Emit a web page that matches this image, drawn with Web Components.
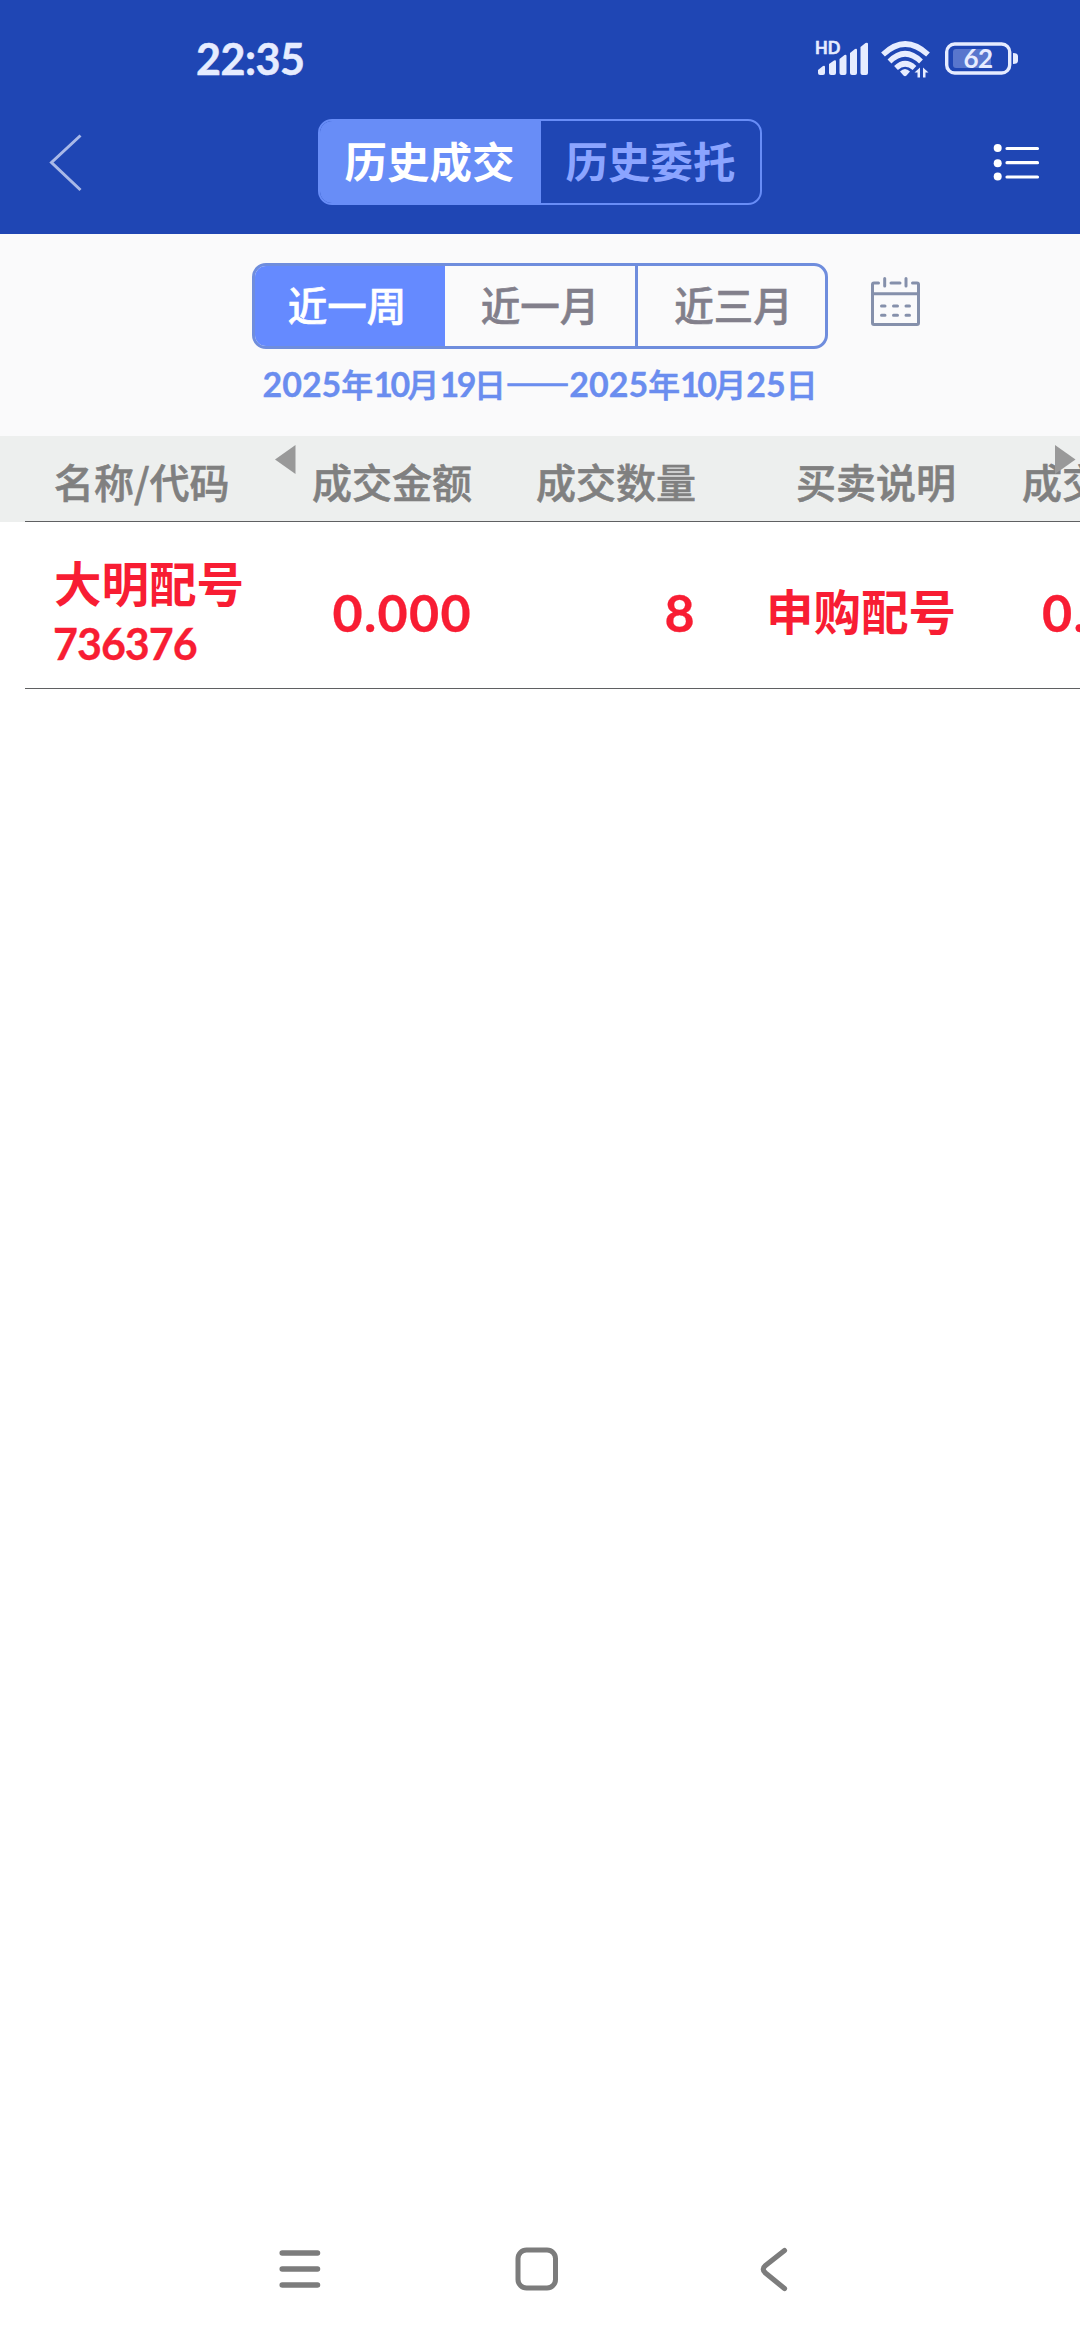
<!DOCTYPE html>
<html lang="zh-CN">
<head>
<meta charset="utf-8">
<title>历史成交</title>
<style>
body {
    margin: 0;
    background-color: #fff;
    font-family: "Noto Sans CJK SC", sans-serif;
}
</style>
</head>
<body>
<trade-app></trade-app>

<script>
function define(name, html) {
    const template = document.createElement("template");
    template.innerHTML = html.trim();

    customElements.define(name, class extends HTMLElement {
        constructor() {
            super();
            this.attachShadow({mode: "open"});
            this.shadowRoot.appendChild(template.content.cloneNode(true));
        }
    });
}

define("status-bar", `
<style>
:host {
    display: flex;
    justify-content: space-between;
    align-items: center;
    height: 118px;
    padding: 0 62px 0 196px;
    box-sizing: border-box;
    color: #e6ecff;
    font-family: Lato, sans-serif;
    font-weight: 700;
}

.time {
    font-size: 43px;
    line-height: 120px;
    letter-spacing: -.5px;
    -webkit-text-stroke: .5px;
}

svg {
    display: block;
}
</style>
<span class="time">22:35</span>
<svg width="204" height="40" viewBox="814 40 204 40" fill="#e6ecff">
    <text x="815" y="55" font-size="16.5" stroke="#e6ecff" stroke-width=".5">HD</text>
    <path d="M818 71l5-4q2-1 2 1v6q0 2-2 2h-3q-2 0-2-2z"/>
    <path d="M829 65l5-3.500q2-1 2 1v11.500q0 2-2 2h-3q-2 0-2-2z"/>
    <path d="M839.500 60l5-4q2-1 2 1v17q0 2-2 2h-3q-2 0-2-2z"/>
    <path d="M850 54l5-4q2-1 2 1v23q0 2-2 2h-3q-2 0-2-2z"/>
    <path d="M860.500 48l5-4q2.500-1 2.500 1v29q0 2-2 2h-3.500q-2 0-2-2z"/>
    <g fill="none" stroke="#e6ecff" stroke-width="5.500">
        <path d="M883 55.500Q905 34.500 928 55.500"/>
        <path d="M889.500 62.500Q905 47 921 62.500"/>
        <path d="M896 69Q905 60.500 914.500 69"/>
    </g>
    <path d="M900 72.500Q905 67.500 910 72.500l-3.500 4q-1.500 1.500-3 0z"/>
    <path d="M914.500 73.500l5.500-5v10h-2.500v-5zM923 68.500l5.500 5h-3v5h-2.500z"/>
    <rect x="946.700" y="45" width="63" height="29" rx="8" fill="none" stroke="#e6ecff" stroke-width="3.400"/>
    <rect x="953" y="50" width="38" height="19" rx="3" fill="#5876cd"/>
    <path d="M1013 54q5 0 5 3v5q0 3-5 3z"/>
    <text x="963.500" y="69" font-size="26" letter-spacing="-.5">62</text>
</svg>
`);

define("title-bar", `
<style>
:host {
    display: flex;
    justify-content: space-between;
    align-items: flex-start;
    height: 116px;
    padding: 1px 38px 0 48px;
    box-sizing: border-box;
}

svg {
    display: block;
}

.tabs {
    display: flex;
    width: 444px;
    height: 86px;
    margin-left: 4px;
    box-sizing: border-box;
    border: 2px solid #688df7;
    border-radius: 14px;
    overflow: hidden;
}
</style>
<svg width="36" height="86" viewBox="48 119 36 86" fill="none" stroke="#a9b9e8" stroke-width="3"><path d="M80.500 135.500L51.500 162.500L80.500 190"/></svg>
<div class="tabs"><slot></slot></div>
<svg width="50" height="86" viewBox="992 119 50 86" fill="#fff" stroke="#fff" stroke-width="3.200" stroke-linecap="round">
    <g stroke="none">
        <circle cx="997.700" cy="148" r="4"/>
        <circle cx="997.700" cy="163.300" r="4"/>
        <circle cx="997.700" cy="176.500" r="4"/>
    </g>
    <path d="M1007 148.500H1037.500M1007 162.700H1037.500M1007 177H1037.500"/>
</svg>
`);

define("title-tab", `
<style>
:host {
    flex: 1;
    color: #8ba4ff;
    font-size: 42.500px;
    font-weight: 700;
    line-height: 77px;
    text-align: center;
}

:host([active]) {
    padding-right: 2px;
    background-color: #688df7;
    color: #fff;
}
</style>
<slot></slot>
`);

define("range-filter", `
<style>
:host {
    display: flex;
    flex-flow: column nowrap;
    align-items: center;
    height: 202px;
    padding-top: 29px;
    box-sizing: border-box;
    background-color: #fafafb;
}

.row {
    display: flex;
    width: 100%;
    padding-left: 252px;
    box-sizing: border-box;
}

.ranges {
    display: flex;
    width: 576px;
    height: 86px;
    box-sizing: border-box;
    border: 3px solid #6f8ddd;
    border-radius: 14px;
    overflow: hidden;
}

svg {
    display: block;
    margin: 13px 0 0 42px;
}
</style>
<div class="row">
    <div class="ranges"><slot></slot></div>
    <svg width="52" height="52" viewBox="870 276 52 52" fill="none" stroke="#8590ab" stroke-width="3" stroke-linecap="round">
        <path d="M878.500 283H874q-1.500 0-1.500 1.500V323q0 1.500 1.500 1.500H917q1.500 0 1.500-1.500V284.500q0-1.500-1.500-1.500H912.500M891 283H900M884.700 278.500V286M906 278.500V286M873 293.700H918"/>
        <path d="M881.500 306H885M893.500 306H897.500M906 306H909.500M881.500 315.300H885M893.500 315.300H897.500M906 315.300H909.500"/>
    </svg>
</div>
<slot name="dates"></slot>
`);

define("range-option", `
<style>
:host {
    flex: 0 0 190px;
    box-sizing: border-box;
    color: #827f8b;
    font-size: 39.500px;
    font-weight: 500;
    line-height: 75px;
    text-align: center;
    -webkit-text-stroke: .6px;
}

:host([active]) {
    padding-right: 6px;
    background-color: #658aff;
    color: #fff;
}

:host([divided]) {
    padding-left: 4px;
    border-left: 3px solid #6f8ddd;
}
</style>
<slot></slot>
`);

define("date-range", `
<style>
:host {
    display: block;
    color: #6a8def;
    font-size: 31.800px;
    font-weight: 500;
    line-height: 68px;
    white-space: nowrap;
    -webkit-text-stroke: .7px;
}

::slotted(span) {
    -webkit-text-stroke: 1.600px;
}
</style>
<slot></slot>
`);

// digits use a latin face, drawn larger than the text around them
define("num-text", `
<style>
:host {
    font-family: Lato, sans-serif;
    font-size: var(--num-size, 34px);
    font-weight: 700;
    letter-spacing: var(--num-gap, 0);
    line-height: 1;
    -webkit-text-stroke: .3px;
}

:host([tight]) {
    letter-spacing: -2.500px;
}
</style><slot></slot>
`);

define("deal-table", `
<style>
:host {
    display: block;
    position: relative;
    overflow: hidden;
}

svg {
    position: absolute;
    top: 9px;
}

.prev {
    left: 275px;
}

.next {
    left: 1055px;
}
</style>
<slot></slot>
<svg class="prev" width="21" height="29"><path d="M0 14.500L20.500 0V29z" fill="#999"/></svg>
<svg class="next" width="21" height="29"><path d="M20.500 14.500L0 0V29z" fill="#999"/></svg>
`);

define("deal-row", `
<style>
:host {
    display: grid;
    grid-template-columns: 201px 217px 224px 260px auto;
    height: 167px;
    padding: 8px 0 0 54px;
    box-sizing: border-box;
    align-items: center;
    justify-items: end;
    white-space: nowrap;
    color: #f81d33;
    font-size: 47.500px;
    font-weight: 700;
    background: linear-gradient(#5f6062, #5f6062) 25px 100% / 100% 1px no-repeat;
}

:host([head]) {
    height: 86px;
    padding-top: 4px;
    color: #808080;
    font-size: 40px;
    font-weight: 500;
    background-color: #edefee;
    -webkit-text-stroke: .6px;
}

::slotted(:first-child) {
    justify-self: start;
}

::slotted(num-text) {
    padding-top: 4px;
}

::slotted(:last-child) {
    justify-self: start;
    padding-left: var(--last-pad, 67px);
}
</style>
<slot></slot>
`);

define("stock-name", `
<style>
:host {
    display: flex;
    flex-flow: column nowrap;
    padding-top: 8px;
    line-height: 60px;
    --num-size: 43px;
    --num-gap: -1px;
}

::slotted(num-text) {
    margin-left: -1px;
    line-height: 64px;
}
</style>
<slot></slot>
`);

define("nav-bar", `
<style>
:host {
    display: flex;
    justify-content: center;
    align-items: center;
    gap: 188.500px;
    height: 142px;
    padding-right: 7px;
}
</style>
<svg width="48" height="48" viewBox="275.500 2245 48 48" stroke="#7c7c7c" stroke-width="5.500" stroke-linecap="round"><path d="M281.700 2253H317M281.700 2269H317M281.700 2285H317"/></svg>
<svg width="48" height="48" viewBox="512 2245 48 48" fill="none" stroke="#7c7c7c" stroke-width="5"><rect x="517" y="2250" width="37.500" height="38" rx="8.500"/></svg>
<svg width="48" height="48" viewBox="749 2245 48 48" fill="none" stroke="#7c7c7c" stroke-width="5.200" stroke-linecap="round"><path d="M784.500 2250.500L765.500 2265.500Q761 2269 765.500 2273L784.500 2288.500"/></svg>
`);

define("trade-app", `
<style>
:host {
    display: flex;
    flex-flow: column nowrap;
    width: 1080px;
    height: 2340px;
    overflow: hidden;
}

header {
    background-color: #1f46b4;
}

main {
    flex: 1;
}

deal-row {
    --num-size: 52px;
    --num-gap: 1.300px;
    --last-pad: 86px;
}

deal-row[head] {
    --last-pad: 66px;
}
</style>
<header>
    <status-bar></status-bar>
    <title-bar>
        <title-tab active>历史成交</title-tab>
        <title-tab>历史委托</title-tab>
    </title-bar>
</header>
<range-filter>
    <range-option active>近一周</range-option>
    <range-option>近一月</range-option>
    <range-option divided>近三月</range-option>
    <date-range slot="dates"><num-text>2025</num-text>年<num-text tight>10</num-text>月<num-text tight>19</num-text>日<span>——</span><num-text>2025</num-text>年<num-text tight>10</num-text>月<num-text>25</num-text>日</date-range>
</range-filter>
<main>
    <deal-table>
        <deal-row head>
            <span>名称/代码</span>
            <span>成交金额</span>
            <span>成交数量</span>
            <span>买卖说明</span>
            <span>成交</span>
        </deal-row>
        <deal-row>
            <stock-name>大明配号<num-text>736376</num-text></stock-name>
            <num-text>0.000</num-text>
            <num-text>8</num-text>
            <span>申购配号</span>
            <num-text>0.</num-text>
        </deal-row>
    </deal-table>
</main>
<nav-bar></nav-bar>
`);
</script>
</body>
</html>
